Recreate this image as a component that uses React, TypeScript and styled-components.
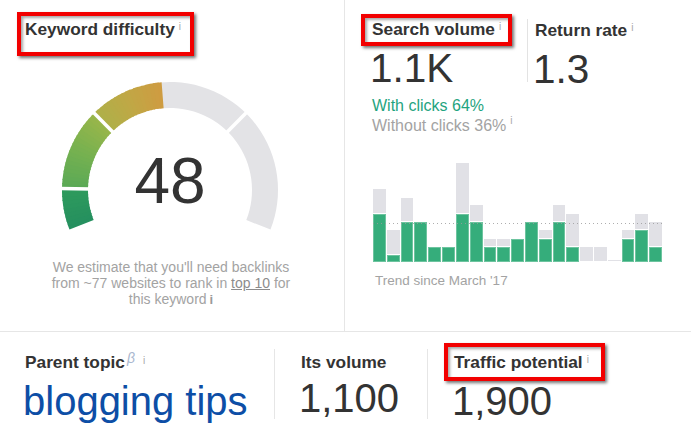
import React from "react";
import styled, { createGlobalStyle, css } from "styled-components";

const GlobalStyle = createGlobalStyle`
  html, body {
    margin: 0;
    padding: 0;
    background: #ffffff;
  }
  body {
    font-family: "Liberation Sans", Arial, Helvetica, sans-serif;
  }
`;

const Page = styled.div`
  width: 691px;
  height: 431px;
  overflow: hidden;
  background: #ffffff;
  color: #333333;
`;

const Top = styled.div`
  display: flex;
  height: 332px;
  box-sizing: border-box;
  border-bottom: 1px solid #e6e6e6;
`;

const LeftPanel = styled.section`
  width: 345px;
  box-sizing: border-box;
  border-right: 1px solid #e6e6e6;
  padding: 18.5px 0 0 25px;
`;

const RightPanel = styled.section`
  flex: 1;
  padding: 19px 0 0 27px;
`;

// title with optional red annotation frame drawn over it
const Title = styled.h2<{ $mark?: string }>`
  position: relative;
  display: block;
  width: fit-content;
  margin: 0;
  font-size: 17.3px;
  line-height: 20px;
  font-weight: bold;
  color: #333333;
  white-space: nowrap;
  ${(p) =>
    p.$mark &&
    css`
      &::after {
        content: "";
        position: absolute;
        inset: ${p.$mark};
        border: 4px solid #f20000;
        box-shadow: 2px 2px 3px rgba(0, 0, 0, 0.55), inset 2px 2px 3px rgba(0, 0, 0, 0.35);
        pointer-events: none;
      }
    `}
`;

const Info = styled.span<{ $raise?: number }>`
  position: relative;
  top: -${(p) => p.$raise ?? 5}px;
  margin-left: 4px;
  font-size: 10px;
  font-weight: normal;
  color: #a8a8a8;
`;

const Beta = styled.span`
  position: relative;
  top: -5px;
  margin-left: 2px;
  margin-right: 4px;
  font-size: 14px;
  font-style: italic;
  font-weight: normal;
  color: #a9b7cf;
`;

/* ---------- gauge ---------- */

const GaugeWrap = styled.div`
  position: relative;
  width: 220px;
  height: 152px;
  margin: 38.5px 0 0 35px;
`;

const GaugeValue = styled.div`
  position: absolute;
  left: 0;
  right: 0;
  top: 69px;
  text-align: center;
  font-size: 64px;
  line-height: 64px;
  color: #333333;
`;

const Note = styled.p`
  width: 252px;
  margin: 27.4px 0 0 20px;
  text-align: center;
  font-size: 14px;
  line-height: 16px;
  color: #a3a3a3;
  a {
    display: inline-block;
    color: #8c8c8c;
    text-decoration: underline;
  }
`;

const NoteInfo = styled.span`
  display: inline-block;
  margin-left: 3px;
  font-size: 13px;
  font-weight: bold;
  color: #9a9a9a;
`;

const CX = 110;
const CY = 110;
const R = 108;
const RI = 82;
const START = 201.5;
const SWEEP = 223;

const polar = (v: number, rad: number) => {
  const a = ((START - (v / 100) * SWEEP) * Math.PI) / 180;
  return [CX + rad * Math.cos(a), CY - rad * Math.sin(a)];
};

const slice = (v0: number, v1: number) => {
  const [x0, y0] = polar(v0, R);
  const [x1, y1] = polar(v1, R);
  const [x2, y2] = polar(v1, RI);
  const [x3, y3] = polar(v0, RI);
  const large = ((v1 - v0) / 100) * SWEEP > 180 ? 1 : 0;
  return `M${x0} ${y0} A${R} ${R} 0 ${large} 1 ${x1} ${y1} L${x2} ${y2} A${RI} ${RI} 0 ${large} 0 ${x3} ${y3} Z`;
};

const stops: [number, number[]][] = [
  [0, [0x24, 0x8f, 0x5f]],
  [9.99, [0x2e, 0x9b, 0x5d]],
  [10, [0x5a, 0xa9, 0x56]],
  [20, [0x76, 0xb1, 0x50]],
  [29.99, [0x9a, 0xb6, 0x4a]],
  [30, [0xae, 0xb1, 0x49]],
  [40, [0xc2, 0xa6, 0x45]],
  [48, [0xcf, 0x9b, 0x41]],
];

const colorAt = (v: number) => {
  for (let i = 0; i < stops.length - 1; i++) {
    const [a, ca] = stops[i];
    const [b, cb] = stops[i + 1];
    if (v >= a && v <= b) {
      const t = (v - a) / (b - a);
      const c = ca.map((x, k) => Math.round(x + (cb[k] - x) * t));
      return `rgb(${c[0]},${c[1]},${c[2]})`;
    }
  }
  return "#cf9b41";
};

const Gauge = ({ value }: { value: number }) => {
  const slices = [];
  for (let v = 0; v < value; v += 1) {
    slices.push(<path key={v} d={slice(v, Math.min(v + 1.3, value))} fill={colorAt(v + 0.5)} />);
  }
  return (
    <GaugeWrap>
      <svg width="220" height="152" viewBox="0 0 220 152">
        <path d={slice(value - 0.2, 100)} fill="#e3e3e6" />
        {slices}
        {[10, 30, 70].map((b) => {
          const [x0, y0] = polar(b, RI - 3);
          const [x1, y1] = polar(b, R + 3);
          return <line key={b} x1={x0} y1={y0} x2={x1} y2={y1} stroke="#ffffff" strokeWidth="3.5" />;
        })}
      </svg>
      <GaugeValue>{value}</GaugeValue>
    </GaugeWrap>
  );
};

/* ---------- search volume ---------- */

const StatsRow = styled.div`
  display: flex;
  height: 63px;
`;

const Stat = styled.div<{ $divider?: boolean }>`
  ${(p) =>
    p.$divider
      ? css`
          border-left: 1px solid #e3e3e3;
          padding: 1px 0 0 7px;
        `
      : css`
          width: 155px;
        `}
`;

const BigNumber = styled.div<{ $blue?: boolean }>`
  margin: 6.5px 0 0 -2px;
  font-size: 40.5px;
  line-height: 38px;
  color: ${(p) => (p.$blue ? "#0d4ea6" : "#333333")};
  white-space: nowrap;
`;

const Clicks = styled.div`
  margin-top: 14px;
  font-size: 16px;
  line-height: 20px;
`;

const ClickLine = styled.div<{ $tone: "green" | "gray" }>`
  color: ${(p) => (p.$tone === "green" ? "#1fa480" : "#a3a3a3")};
`;

const Chart = styled.div`
  position: relative;
  display: flex;
  align-items: flex-end;
  gap: 1px;
  width: 289px;
  height: 110px;
  margin: 14px 0 0 1px;
`;

const BarCol = styled.div`
  flex: 1;
  display: flex;
  flex-direction: column;
  justify-content: flex-end;
`;

const BarPart = styled.div<{ $kind: "clicks" | "rest" }>`
  box-sizing: border-box;
  ${(p) =>
    p.$kind === "clicks"
      ? css`
          background: #35ad7b;
          box-shadow: inset 0 0 0 1px rgba(255, 255, 255, 0.28);
        `
      : css`
          background: #e1e1e6;
          border-bottom: 1px solid #ffffff;
        `}
`;

const AvgLine = styled.div`
  position: absolute;
  left: 0;
  right: -1px;
  bottom: 38px;
  height: 1px;
  background: repeating-linear-gradient(to right, #9a9a9a 0 1px, transparent 1px 4px);
  opacity: 0.8;
`;

const Trend = styled.div`
  margin: 11px 0 0 3px;
  font-size: 13.5px;
  line-height: 16px;
  color: #a3a3a3;
`;

// [with clicks, total] in px
const bars: [number, number][] = [
  [48.3, 73.3],
  [7.3, 32.3],
  [40, 64.3],
  [40, 40],
  [15, 15],
  [15, 15],
  [48.3, 99],
  [40, 56.7],
  [15, 23.3],
  [15, 23.3],
  [23.3, 23.3],
  [40, 40],
  [23.3, 32.3],
  [40, 56.7],
  [15, 48.3],
  [0, 15],
  [0, 15],
  [0, 2.3],
  [23.3, 32.3],
  [32.3, 48.3],
  [15, 40],
];

/* ---------- bottom metrics ---------- */

const Bottom = styled.div`
  display: flex;
  padding-top: 17px;
`;

const Metric = styled.div<{ $width?: number; $pad: number }>`
  ${(p) =>
    p.$width
      ? css`
          width: ${p.$width}px;
          border-right: 1px solid #e6e6e6;
        `
      : css`
          flex: 1;
        `}
  height: 70px;
  box-sizing: border-box;
  padding: 2.5px 0 0 ${(p) => p.$pad}px;
`;

const MetricValue = styled(BigNumber)`
  font-size: 40px;
  line-height: 42px;
  margin-top: 5.5px;
`;

const App = () => {
  return (
    <Page>
      <GlobalStyle />
      <Top>
        <LeftPanel>
          <Title $mark="-6.5px -13px -14.5px -8px">
            Keyword difficulty<Info $raise={4.5}>i</Info>
          </Title>
          <Gauge value={48} />
          <Note>
            We estimate that you'll need backlinks from ~77 websites to rank in <a>top 10</a> for this keyword
            <NoteInfo>i</NoteInfo>
          </Note>
        </LeftPanel>
        <RightPanel>
          <StatsRow>
            <Stat>
              <Title $mark="-5px -11px -4px -11px">
                Search volume<Info>i</Info>
              </Title>
              <BigNumber>1.1K</BigNumber>
            </Stat>
            <Stat $divider>
              <Title>
                Return rate<Info>i</Info>
              </Title>
              <BigNumber>1.3</BigNumber>
            </Stat>
          </StatsRow>
          <Clicks>
            <ClickLine $tone="green">With clicks 64%</ClickLine>
            <ClickLine $tone="gray">
              Without clicks 36%<Info $raise={7}>i</Info>
            </ClickLine>
          </Clicks>
          <Chart>
            {bars.map(([green, total], i) => (
              <BarCol key={i}>
                {total > green && <BarPart $kind="rest" style={{ height: total - green }} />}
                {green > 0 && <BarPart $kind="clicks" style={{ height: green }} />}
              </BarCol>
            ))}
            <AvgLine />
          </Chart>
          <Trend>Trend since March '17</Trend>
        </RightPanel>
      </Top>
      <Bottom>
        <Metric $width={275} $pad={25}>
          <Title>
            Parent topic<Beta>β</Beta>
            <Info $raise={4}>i</Info>
          </Title>
          <MetricValue $blue>blogging tips</MetricValue>
        </Metric>
        <Metric $width={153} $pad={26}>
          <Title>Its volume</Title>
          <MetricValue>1,100</MetricValue>
        </Metric>
        <Metric $pad={26}>
          <Title $mark="-8.5px -16px -6.5px -10px">
            Traffic potential<Info>i</Info>
          </Title>
          <MetricValue>1,900</MetricValue>
        </Metric>
      </Bottom>
    </Page>
  );
};

export default App;
